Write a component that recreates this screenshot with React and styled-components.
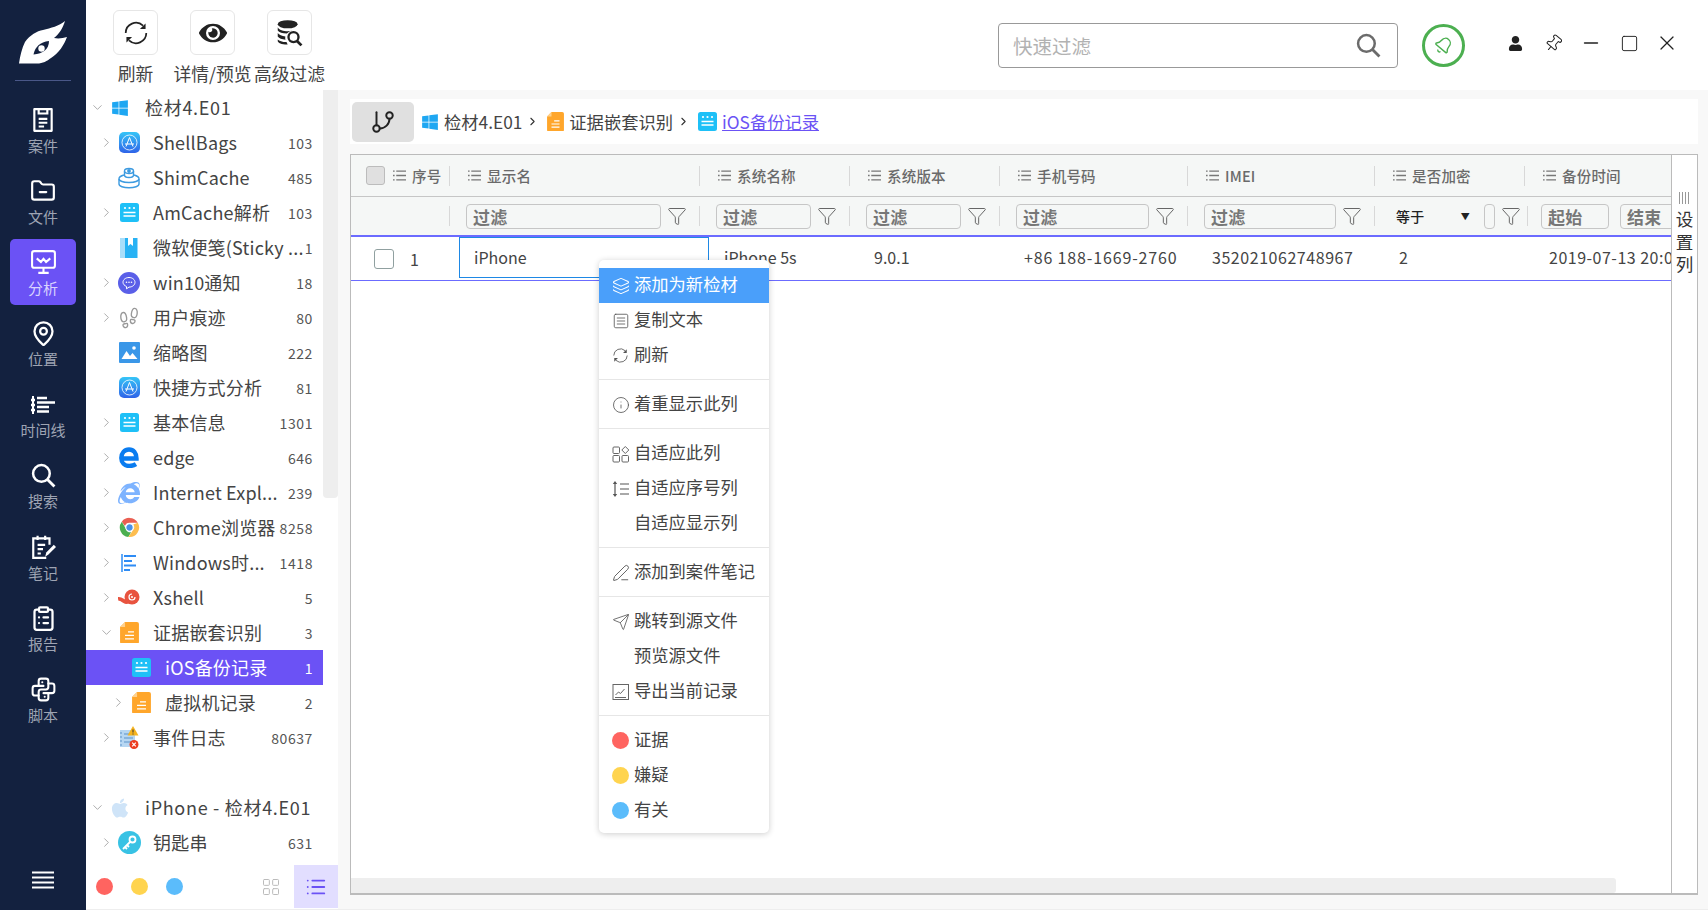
import React from 'react'
import styled, { createGlobalStyle } from 'styled-components'
import {
    ChevronDown,
    ChevronRight,
    Filter,
    FolderMinus,
    GitBranch,
    Info,
    Layers,
    MapPin,
    Minus,
    PenLine,
    Pin,
    Send,
    Square,
    SquareMenu,
    X,
    Bell,
    LayoutGrid,
    List,
    ClipboardList,
} from 'lucide-react'
import { TbBrandPython } from 'react-icons/tb'
import { IoFootstepsOutline } from 'react-icons/io5'
import { FaApple, FaEye, FaInternetExplorer, FaUser, FaWindows } from 'react-icons/fa'

const GlobalStyle = createGlobalStyle`
    html, body {
        margin: 0;
        padding: 0;
        background: #fff;
        font-family: "Noto Sans CJK SC", "Noto Sans", sans-serif;
        overflow: hidden;
    }
    * { box-sizing: border-box; }
`

const Page = styled.div`
    position: relative;
    display: flex;
    width: 1708px;
    height: 910px;
    overflow: hidden;
    color: #444;
`

/* ---------- left rail ---------- */
const Rail = styled.nav`
    width: 86px;
    flex: none;
    background: #13213f;
    display: flex;
    flex-direction: column;
    align-items: center;
`
const LogoBox = styled.div`
    width: 56px;
    height: 81px;
    margin-bottom: 16px;
    padding-top: 20px;
    border-bottom: 1px solid #4a5788;
    display: flex;
    justify-content: center;
`
const RailItem = styled.div`
    width: 66px;
    height: 66px;
    margin-bottom: 5.2px;
    padding-top: 10px;
    border-radius: 5px;
    display: flex;
    flex-direction: column;
    align-items: center;
    background: ${(p) => (p.$active ? '#6b52f5' : 'transparent')};
    color: #fff;
    span {
        margin-top: 2.5px;
        font-size: 15px;
        line-height: 20px;
        color: ${(p) => (p.$active ? '#d9d3ff' : '#9ea4b3')};
    }
`
const RailGlyph = styled.div`
    height: 26px;
    display: flex;
    align-items: center;
    justify-content: center;
`
const RailBurger = styled.div`
    margin-top: auto;
    margin-bottom: 21px;
    display: flex;
`

/* ---------- content ---------- */
const Content = styled.div`
    flex: 1;
    min-width: 0;
    display: flex;
    flex-direction: column;
`
const TopBar = styled.header`
    height: 90px;
    flex: none;
    display: flex;
    align-items: flex-start;
    padding-left: 11px;
`
const ToolItem = styled.div`
    width: 77px;
    padding-top: 10px;
    display: flex;
    flex-direction: column;
    align-items: center;
    font-size: 17.8px;
    line-height: 24px;
    color: #444;
    white-space: nowrap;
`
const ToolButton = styled.div`
    width: 45px;
    height: 45px;
    margin-bottom: 6px;
    border: 1px solid #e6e6e6;
    border-radius: 6px;
    display: flex;
    align-items: center;
    justify-content: center;
    color: #222;
`
const SearchBox = styled.div`
    width: 400px;
    height: 45px;
    margin: 23px 0 0 auto;
    padding: 0 16px 0 14px;
    border: 1px solid #999;
    border-radius: 4px;
    display: flex;
    align-items: center;
    justify-content: space-between;
    font-size: 19.5px;
    color: #b2b2b2;
`
const BellRing = styled.div`
    width: 43px;
    height: 43px;
    margin: 24px 31px 0 24px;
    border: 3px solid #4caf50;
    border-radius: 50%;
    display: flex;
    align-items: center;
    justify-content: center;
    color: #4caf50;
    svg { transform: rotate(40deg); }
`
const WindowControls = styled.div`
    display: flex;
    margin-top: 24px;
    padding-right: 22px;
`
const WindowButton = styled.div`
    width: 38px;
    height: 38px;
    display: flex;
    align-items: center;
    justify-content: center;
    color: #222;
`
const Body = styled.div`
    flex: 1;
    min-height: 0;
    display: flex;
    border-bottom: 1px solid #eee;
`

/* ---------- tree ---------- */
const TreePanel = styled.aside`
    position: relative;
    width: 252px;
    flex: none;
    display: flex;
    flex-direction: column;
    background: #fff;
`
const ScrollThumb = styled.div`
    position: absolute;
    top: 0;
    right: 0;
    width: 15px;
    height: 408px;
    background: #eee;
    border-radius: 0 0 4px 4px;
`
const TreeList = styled.div`
    flex: 1;
    min-height: 0;
    width: 237px;
`
const TreeRow = styled.div`
    height: 35px;
    display: flex;
    align-items: center;
    padding-left: ${(p) => p.$indent}px;
    padding-right: 10px;
    background: ${(p) => (p.$selected ? '#6b52f5' : 'transparent')};
    color: ${(p) => (p.$selected ? '#fff' : '#444')};
`
const Chevron = styled.div`
    width: 16px;
    flex: none;
    display: flex;
    justify-content: center;
    color: #888;
`
const TreeIcon = styled.div`
    width: 30px;
    height: 35px;
    flex: none;
    display: flex;
    align-items: center;
    justify-content: center;
`
const TreeLabel = styled.div`
    margin-left: ${(p) => (p.$root ? 10 : 9)}px;
    padding-bottom: 2px;
    flex: 1;
    min-width: 0;
    font-size: 18px;
    letter-spacing: ${(p) => (p.$root ? 0.7 : 0.2)}px;
    white-space: nowrap;
`
const TreeCount = styled.div`
    flex: none;
    font-size: 14px;
    letter-spacing: 0.6px;
    color: ${(p) => (p.$selected ? '#fff' : '#555')};
`
const TreeGap = styled.div`
    height: 35px;
`
const TreeFooter = styled.div`
    height: 43px;
    margin-bottom: 1px;
    flex: none;
    display: flex;
    align-items: center;
    padding-left: 10px;
`
const DotGroup = styled.div`
    display: flex;
    gap: 18px;
`
const Dot = styled.div`
    width: 17px;
    height: 17px;
    flex: none;
    border-radius: 50%;
    background: ${(p) => p.$color};
`
const FooterGrid = styled.div`
    margin-left: auto;
    margin-right: 13px;
    display: flex;
    color: #bbb;
`
const FooterList = styled.div`
    width: 44px;
    height: 43px;
    display: flex;
    align-items: center;
    justify-content: center;
    background: #e2deff;
    color: #6b52f5;
`

/* ---------- main panel ---------- */
const MainPanel = styled.main`
    flex: 1;
    min-width: 0;
    background: #f8f8f8;
    padding: 9px 10px 14px 12px;
    display: flex;
    flex-direction: column;
`
const CrumbBar = styled.div`
    height: 45px;
    flex: none;
    margin-bottom: 10px;
    padding: 3px 2px;
    background: #fff;
    display: flex;
    align-items: center;
    font-size: 17.3px;
    color: #444;
`
const BranchButton = styled.div`
    width: 62px;
    height: 40px;
    margin-right: 7px;
    border-radius: 5px;
    background: #e0e0e0;
    color: #222;
    display: flex;
    align-items: center;
    justify-content: center;
`
const CrumbText = styled.span`
    margin-left: 5px;
    white-space: nowrap;
`
const CrumbLink = styled(CrumbText)`
    color: #6b52f5;
    text-decoration: underline;
`
const CrumbArrow = styled.div`
    width: 25px;
    padding-right: 5px;
    flex: none;
    display: flex;
    justify-content: center;
    color: #333;
`
const Table = styled.section`
    flex: 1;
    min-height: 0;
    display: flex;
    background: #fff;
    border: 1px solid #bbb;
    border-bottom-width: 2px;
`
const TableMain = styled.div`
    flex: 1;
    min-width: 0;
    overflow: hidden;
    display: flex;
    flex-direction: column;
`
const HeadRow = styled.div`
    height: 42px;
    flex: none;
    display: flex;
    background: #f5f7f6;
    border-bottom: 1px solid #c6c6c6;
    width: max-content;
    min-width: 100%;
`
const FilterRow = styled.div`
    height: 38px;
    flex: none;
    display: flex;
    background: #f5f7f6;
    width: max-content;
    min-width: 100%;
`
const HeadCell = styled.div`
    width: ${(p) => p.$w}px;
    flex: none;
    display: flex;
    align-items: center;
    padding-left: ${(p) => p.$pad}px;
    font-size: 14.5px;
    font-weight: 500;
    letter-spacing: 0.2px;
    color: #6a6a6a;
    white-space: nowrap;
`
const HeadLines = styled.div`
    display: flex;
    flex: none;
    margin-right: 6px;
`
const ColumnSep = styled.div`
    width: 1px;
    height: 20px;
    margin-left: auto;
    flex: none;
    background: #d8d8d8;
`
const HeadCheck = styled.div`
    width: 19px;
    height: 19px;
    margin-right: 8px;
    flex: none;
    border: 1px solid #bcbcbc;
    border-radius: 3px;
    background: #e0e0e0;
`
const FilterInput = styled.div`
    width: ${(p) => p.$w}px;
    height: 25px;
    flex: none;
    padding-left: 6px;
    margin-right: ${(p) => p.$gap || 0}px;
    border: 1px solid #c6c6c6;
    border-radius: 4px;
    font-size: 17px;
    font-weight: 700;
    line-height: 23px;
    color: #777;
    overflow: hidden;
    white-space: nowrap;
`
const FilterIcon = styled.div`
    width: 32px;
    flex: none;
    display: flex;
    justify-content: center;
    color: #666;
`
const SelectText = styled.div`
    width: 93px;
    flex: none;
    padding: 0 14px 0 5px;
    display: flex;
    align-items: center;
    justify-content: space-between;
    font-size: 14px;
    font-weight: 500;
    color: #222;
    i {
        font-style: normal;
        font-size: 9px;
    }
`
const DataRow = styled.div`
    height: 46px;
    flex: none;
    display: flex;
    border-top: 2px solid #6b6bff;
    border-bottom: 1px solid #6b6bff;
    width: max-content;
    min-width: 100%;
`
const DataCell = styled.div`
    width: ${(p) => p.$w}px;
    height: 41px;
    flex: none;
    display: flex;
    align-items: center;
    padding: ${(p) => p.$top || 0}px 0 1px ${(p) => p.$pad}px;
    font-size: 16px;
    letter-spacing: ${(p) => p.$ls || 0}px;
    color: #444;
    white-space: nowrap;
    border: 1.5px solid ${(p) => (p.$focus ? '#1e88e5' : 'transparent')};
`
const RowCheck = styled.div`
    width: 20px;
    height: 20px;
    margin-right: 16px;
    flex: none;
    border: 1.5px solid #90a0a0;
    border-radius: 3px;
    background: #fff;
`
const TableFill = styled.div`
    flex: 1;
`
const HScrollBar = styled.div`
    width: 1265px;
    height: 15px;
    flex: none;
    background: #eee;
    border-radius: 0 3px 3px 0;
`
const SettingsColumn = styled.div`
    width: 26px;
    flex: none;
    padding-top: 37px;
    border-left: 1px solid #bbb;
    display: flex;
    flex-direction: column;
    align-items: center;
    font-size: 17.5px;
    line-height: 22.5px;
    color: #333;
`
const SettingsGrip = styled.div`
    display: flex;
    margin-bottom: 4px;
`

/* ---------- context menu ---------- */
const ContextMenu = styled.div`
    position: absolute;
    top: 260px;
    left: 599px;
    width: 170px;
    padding: 8px 0 5px;
    background: #fff;
    border-radius: 5px;
    box-shadow: 0 1px 6px rgba(0, 0, 0, 0.2);
    z-index: 5;
`
const MenuItem = styled.div`
    height: 35px;
    padding-bottom: 4px;
    display: flex;
    align-items: center;
    background: ${(p) => (p.$active ? '#4a9ffa' : 'transparent')};
    color: ${(p) => (p.$active ? '#fff' : '#444')};
    font-size: 17.3px;
    white-space: nowrap;
`
const MenuIcon = styled.div`
    width: 35px;
    padding: 4px 0 0 13px;
    flex: none;
    display: flex;
    align-items: center;
    color: ${(p) => (p.$active ? '#fff' : '#555')};
`
const MenuDivider = styled.div`
    height: 1px;
    margin: 6px 0 7px;
    background: #e6e6e6;
`

/* ---------- drawings ---------- */
const Logo = () => (
    <svg width="50" height="46" viewBox="19 22 50 46">
        <path
            fill="#fff"
            d="M20 65.500C21 58 23 50 26 44C31 37 38 33 44 32C52 30 60 28 66 23C64 30 60 36 55 40C60 41 64 40 68 39C65 47 60 55 52 60C48 63 44 65.500 38 65.500Z"
        />
        <path fill="#13213f" d="M34.500 56.500C36 49 41 44 50 43C50 51 44 56 34.500 56.500Z" />
        <circle cx="42.500" cy="50.500" r="3.200" fill="#fff" />
    </svg>
)

const Magnifier = ({ size = 24, color = 'currentColor', width = 2.4 }) => (
    <svg width={size} height={size} viewBox="0 0 24 24" fill="none" stroke={color} strokeWidth={width}>
        <circle cx="10" cy="10" r="8" />
        <path d="M15.800 15.800L22.500 22.500" strokeWidth={width * 1.15} />
    </svg>
)

const Sync = ({ size = 26, color = 'currentColor', width = 1.6 }) => (
    <svg width={size} height={size} viewBox="0 0 24 24" fill="none" stroke={color} strokeWidth={width}>
        <path d="M2.500 12a9.500 9.500 0 0 1 16-6.800" />
        <path d="M21.500 12a9.500 9.500 0 0 1-16 6.800" />
        <path d="M20.800 3.200v5.200h-5.200z" fill={color} stroke="none" />
        <path d="M3.200 20.800v-5.200h5.200z" fill={color} stroke="none" />
    </svg>
)

const DbSearch = () => (
    <svg width="28" height="28" viewBox="0 0 24 24" fill="#222">
        <ellipse cx="10" cy="4.500" rx="8.500" ry="3.500" />
        <path d="M1.500 7c1 2.400 5 3.400 8.500 3.400 1.500 0 3-.2 4.300-.6a7 7 0 0 0-5 2.600C5.500 12.300 2.500 11.300 1.500 9.800z" />
        <path d="M1.500 12c1 1.800 3.700 2.600 6.500 2.900-.2 1-.1 1.900.1 2.800-2.900-.3-5.500-1.200-6.600-2.800z" />
        <path d="M1.500 17.500c1.200 1.300 3.800 2.100 7.500 2.300l1 2c-5 .1-8.500-1.300-8.500-3z" />
        <circle cx="15" cy="15.500" r="4.300" fill="none" stroke="#222" strokeWidth="2" />
        <path d="M18 18.800l3.800 3.800" stroke="#222" strokeWidth="2.400" />
    </svg>
)

const RailCase = () => (
    <svg width="26" height="26" viewBox="0 0 24 24" fill="none" stroke="#fff" strokeWidth="2">
        <path d="M4 2h16v20H4z" strokeLinejoin="round" />
        <path d="M8 2v4h8V2M8 11h8M8 14.500h8M8 18h5" />
    </svg>
)

const RailScreen = () => (
    <svg width="27" height="26" viewBox="0 0 26 25" fill="none" stroke="#fff" strokeWidth="2">
        <rect x="2" y="2" width="22" height="16" rx="2" />
        <path d="M6.500 9l4 3.500 2.500-3 2.500 3 4-3.500" />
        <path d="M13 18v4M8 23h10" />
    </svg>
)

const RailTimeline = () => (
    <svg width="26" height="22" viewBox="0 0 26 22" fill="none" stroke="#fff" strokeWidth="2.400">
        <path d="M3 2v18" strokeWidth="2" />
        <path d="M1 6h4M1 11h4M1 16h4" />
        <path d="M7 4h10M7 8.500h18M7 13h12M7 17.500h12" />
    </svg>
)

const RailNote = () => (
    <svg width="26" height="26" viewBox="0 0 24 24" fill="none" stroke="#fff" strokeWidth="2">
        <path d="M15 22H3V4h15v6" />
        <path d="M7 1.500v4M14 1.500v4M7 10h7M7 14h5M7 18h3" />
        <path d="M14 21l1-4 7-7 2 2-7 7z" fill="#fff" stroke="none" />
    </svg>
)

const RailBurgerIcon = () => (
    <svg width="22" height="18" viewBox="0 0 22 18" stroke="#fff" strokeWidth="2.200">
        <path d="M0 1.500h22M0 6.500h22M0 11.500h22M0 16.500h22" />
    </svg>
)

const Lines = ({ color = '#777', size = 13 }) => (
    <svg width={size} height={size} viewBox="0 0 12 12" stroke={color} strokeWidth="1.200">
        <path d="M0 2h1.500M3 2h9M0 6h1.500M3 6h9M0 10h1.500M3 10h9" />
    </svg>
)

const AppStore = () => (
    <svg width="21" height="21" viewBox="0 0 21 21">
        <defs>
            <linearGradient id="appg" x1="0" y1="0" x2="0" y2="1">
                <stop offset="0" stopColor="#35c5f7" />
                <stop offset="1" stopColor="#2f63e8" />
            </linearGradient>
        </defs>
        <rect width="21" height="21" rx="5" fill="url(#appg)" />
        <circle cx="10.500" cy="10.500" r="7.500" fill="none" stroke="#fff" strokeWidth="0.800" />
        <path d="M10.500 5.500L7 14.500M10.500 5.500L14 14.500M6 12h9" stroke="#fff" strokeWidth="1" fill="none" />
    </svg>
)

const Stack = () => (
    <svg width="24" height="24" viewBox="0 0 24 24" fill="none" stroke="#3d9be0" strokeWidth="1.400">
        <ellipse cx="12" cy="5" rx="4.500" ry="2.500" />
        <path d="M7.500 5v4c0 1.400 2 2.500 4.500 2.500s4.500-1.100 4.500-2.500V5" />
        <path d="M7 9c-3 .8-5 2-5 3.800C2 15 6.500 16.500 12 16.500s10-1.500 10-3.700C22 11 20 9.800 17 9" />
        <path d="M2 13v5c0 2.200 4.500 3.800 10 3.800s10-1.600 10-3.800v-5" />
        <circle cx="12" cy="5" r="1.200" fill="#3d9be0" />
    </svg>
)

const NoteCard = () => (
    <svg width="19" height="19" viewBox="0 0 19 19">
        <rect width="19" height="19" rx="2.500" fill="#1ec0f7" />
        <circle cx="5" cy="5" r="1.100" fill="#fff" />
        <circle cx="9.500" cy="5" r="1.100" fill="#fff" />
        <circle cx="14" cy="5" r="1.100" fill="#fff" />
        <path d="M3.500 9.500h12M3.500 13h12" stroke="#fff" strokeWidth="1.300" />
    </svg>
)

const StickyBook = () => (
    <svg width="18" height="20" viewBox="0 0 18 20">
        <rect x="0" y="0" width="5" height="20" fill="#a8defa" />
        <path d="M5 0h3v8l2.500-2L13 8V0h4.500v20H5z" fill="#28b2f4" />
    </svg>
)

const ChatCircle = () => (
    <svg width="22" height="22" viewBox="0 0 22 22">
        <circle cx="11" cy="11" r="11" fill="#5a5fe8" />
        <path
            d="M11 5.500c3.300 0 6 2.100 6 4.800s-2.700 4.800-6 4.800l-2.500 1.700v-2.300c-2-.8-3.500-2.400-3.500-4.200 0-2.700 2.700-4.800 6-4.800z"
            fill="none"
            stroke="#fff"
            strokeWidth="1"
        />
        <circle cx="8.500" cy="10.300" r="0.800" fill="#fff" />
        <circle cx="11" cy="10.300" r="0.800" fill="#fff" />
        <circle cx="13.500" cy="10.300" r="0.800" fill="#fff" />
    </svg>
)

const Picture = () => (
    <svg width="21" height="21" viewBox="0 0 21 21">
        <rect width="21" height="21" fill="#3a97e8" rx="1" />
        <path d="M2.500 17l5-8 3.500 5 2.500-3 5 6z" fill="#fff" />
        <circle cx="15" cy="6" r="1.800" fill="#fff" />
    </svg>
)

const EdgeMark = () => (
    <svg width="20" height="21" viewBox="0 0 20 21" fill="none" stroke="#0a7cf0" strokeWidth="4.400">
        <path d="M4 11.500h13.500C17.500 6 14.500 2.500 10 2.500 5.500 2.500 2.300 6 2.300 11c0 4.800 3.300 8 8 8 2.700 0 4.800-.6 6.700-1.800" />
    </svg>
)

const Chrome = () => (
    <svg width="21" height="21" viewBox="0 0 24 24">
        <path d="M12 1a11 11 0 0 1 9.500 5.500H12A5.500 5.500 0 0 0 6.800 10.300L3.200 5.300A11 11 0 0 1 12 1z" fill="#ea5f52" />
        <path d="M3.200 5.300l4.800 8.400a5.500 5.500 0 0 0 5.800 3.800L10.700 22.900A11 11 0 0 1 3.200 5.300z" fill="#4caf50" />
        <path d="M21.500 6.500A11 11 0 0 1 10.700 22.900l4.800-7.300A5.500 5.500 0 0 0 16.300 8.500z" fill="#fdbd4f" />
        <circle cx="12" cy="12" r="4.200" fill="#4a90e8" stroke="#fff" strokeWidth="1.200" />
    </svg>
)

const TimelineBlue = () => (
    <svg width="20" height="20" viewBox="0 0 20 20" fill="none" stroke="#2e8cf5" strokeWidth="2">
        <path d="M3 1v18" strokeWidth="1.500" />
        <path d="M5 3h12M5 8h8M5 12.500h12M5 17h6" />
    </svg>
)

const XshellMark = () => (
    <svg width="22" height="20" viewBox="0 0 22 20">
        <circle cx="14" cy="9" r="7.500" fill="#e8533f" />
        <path d="M0 11c3-1 6 3 8 3 2 0 3-1 3-3" stroke="#e8533f" strokeWidth="4" fill="none" />
        <path d="M14 6a3 3 0 1 0 3 3" stroke="#fff" strokeWidth="1.200" fill="none" />
        <circle cx="14" cy="9" r="1" fill="#fff" />
    </svg>
)

const DocOrange = ({ size = 19 }) => (
    <svg width={size} height={size * 1.15} viewBox="0 0 19 22">
        <path d="M5 0h12a2 2 0 0 1 2 2v18a2 2 0 0 1-2 2H2a2 2 0 0 1-2-2V5z" fill="#ffa62b" />
        <path d="M5 0v5H0z" fill="#ffd18c" />
        <path d="M8 10h6M5 13.500h9M5 17h9" stroke="#fff" strokeWidth="1.200" />
    </svg>
)

const EventLog = () => (
    <svg width="20" height="24" viewBox="0 0 20 24">
        <rect x="1" y="4" width="15" height="17" fill="#b6d6f2" />
        <path d="M1 7h2M1 11h2M1 15h2M1 19h2M5 8h9M5 12h9M5 16h7" stroke="#5d93c9" strokeWidth="1" />
        <path d="M14 0l5.500 9.500h-11z" fill="#f5b31f" />
        <path d="M14 3.500v3M14 7.500v1" stroke="#333" strokeWidth="1" />
        <circle cx="15" cy="18.500" r="4.500" fill="#ec3d1f" />
        <path d="M13.200 16.700l3.600 3.600M16.800 16.700l-3.600 3.600" stroke="#fff" strokeWidth="1.200" />
    </svg>
)

const KeyCircle = () => (
    <svg width="23" height="23" viewBox="0 0 23 23">
        <circle cx="11.500" cy="11.500" r="11.500" fill="#38c2e4" />
        <circle cx="14.500" cy="8.500" r="3" fill="none" stroke="#fff" strokeWidth="1.800" />
        <path d="M12.500 10.500L5 18M7 16l2 2M9 14l2 2" stroke="#fff" strokeWidth="1.800" fill="none" />
    </svg>
)

const MenuBlocks = () => (
    <svg width="18" height="18" viewBox="0 0 18 18" fill="none" stroke="#666" strokeWidth="1">
        <rect x="1" y="2" width="6.500" height="6.500" rx="1" />
        <rect x="1" y="10.500" width="6.500" height="6.500" rx="1" />
        <rect x="10" y="10.500" width="6.500" height="6.500" rx="1" />
        <path d="M13.300 1.500l3.500 3.500-3.500 3.500L9.800 5z" />
    </svg>
)

const MenuSort = () => (
    <svg width="18" height="18" viewBox="0 0 18 18" fill="none" stroke="#555" strokeWidth="1.200">
        <path d="M3 3v12" />
        <path d="M3 1l2.200 3H.8zM3 17l2.200-3H.8z" fill="#555" stroke="none" />
        <path d="M8 4h9M8 9h9M8 14h9" />
    </svg>
)

const MenuChart = () => (
    <svg width="18" height="18" viewBox="0 0 18 18" fill="none" stroke="#666" strokeWidth="1">
        <rect x="1" y="1.500" width="15.500" height="15" />
        <path d="M3.500 12l3-3 2 1.500 4-4.500M3 14.500h11" />
    </svg>
)

/* ---------- data ---------- */
const railItems = [
    { label: '案件', icon: <RailCase /> },
    { label: '文件', icon: <FolderMinus size={26} strokeWidth={2} /> },
    { label: '分析', icon: <RailScreen />, active: true },
    { label: '位置', icon: <MapPin size={27} strokeWidth={2} /> },
    { label: '时间线', icon: <RailTimeline /> },
    { label: '搜索', icon: <Magnifier size={25} /> },
    { label: '笔记', icon: <RailNote /> },
    { label: '报告', icon: <ClipboardList size={27} strokeWidth={2} /> },
    { label: '脚本', icon: <TbBrandPython size={29} strokeWidth={1.7} /> },
]

const treeRows = [
    { label: '检材4.E01', root: true, open: true, icon: <FaWindows size={18} color="#1ea7f2" /> },
    { label: 'ShellBags', count: 103, arrow: true, icon: <AppStore /> },
    { label: 'ShimCache', count: 485, icon: <Stack /> },
    { label: 'AmCache解析', count: 103, arrow: true, icon: <NoteCard /> },
    { label: '微软便笺(Sticky ...', count: 1, icon: <StickyBook /> },
    { label: 'win10通知', count: 18, arrow: true, icon: <ChatCircle /> },
    { label: '用户痕迹', count: 80, arrow: true, icon: <IoFootstepsOutline size={22} color="#999" /> },
    { label: '缩略图', count: 222, icon: <Picture /> },
    { label: '快捷方式分析', count: 81, icon: <AppStore /> },
    { label: '基本信息', count: 1301, arrow: true, icon: <NoteCard /> },
    { label: 'edge', count: 646, arrow: true, icon: <EdgeMark /> },
    { label: 'Internet Expl...', count: 239, arrow: true, icon: <FaInternetExplorer size={22} color="#7db3ff" /> },
    { label: 'Chrome浏览器', count: 8258, arrow: true, icon: <Chrome /> },
    { label: 'Windows时...', count: 1418, arrow: true, icon: <TimelineBlue /> },
    { label: 'Xshell', count: 5, arrow: true, icon: <XshellMark /> },
    { label: '证据嵌套识别', count: 3, arrow: true, open: true, icon: <DocOrange /> },
    { label: 'iOS备份记录', count: 1, level: 2, selected: true, icon: <NoteCard /> },
    { label: '虚拟机记录', count: 2, level: 2, arrow: true, icon: <DocOrange /> },
    { label: '事件日志', count: 80637, arrow: true, icon: <EventLog /> },
    { gap: true },
    { label: 'iPhone - 检材4.E01', root: true, open: true, icon: <FaApple size={22} color="#cfe4f8" /> },
    { label: '钥匙串', count: 631, arrow: true, icon: <KeyCircle /> },
]

const columns = [
    { title: '显示名', w: 250, input: 195, value: 'iPhone', focus: true },
    { title: '系统名称', w: 150, input: 95, value: 'iPhone 5s' },
    { title: '系统版本', w: 150, input: 95, value: '9.0.1' },
    { title: '手机号码', w: 188, input: 133, value: '+86 188-1669-2760', ls: 0.85 },
    { title: 'IMEI', w: 187, input: 132, value: '352021062748967', ls: 0.55 },
    { title: '是否加密', w: 150, select: true, value: '2' },
    { title: '备份时间', w: 200, range: true, value: '2019-07-13 20:0', ls: 0.5 },
]

const menuGroups = [
    [
        { label: '添加为新检材', icon: <Layers size={18} strokeWidth={1.4} />, active: true },
        { label: '复制文本', icon: <SquareMenu size={18} strokeWidth={1.1} /> },
        { label: '刷新', icon: <Sync size={17} width={1.2} /> },
    ],
    [{ label: '着重显示此列', icon: <Info size={18} strokeWidth={1.1} /> }],
    [
        { label: '自适应此列', icon: <MenuBlocks /> },
        { label: '自适应序号列', icon: <MenuSort /> },
        { label: '自适应显示列' },
    ],
    [{ label: '添加到案件笔记', icon: <PenLine size={18} strokeWidth={1.2} /> }],
    [
        { label: '跳转到源文件', icon: <Send size={18} strokeWidth={1.1} /> },
        { label: '预览源文件' },
        { label: '导出当前记录', icon: <MenuChart /> },
    ],
    [
        { label: '证据', icon: <Dot $color="#ff6460" /> },
        { label: '嫌疑', icon: <Dot $color="#ffd44f" /> },
        { label: '有关', icon: <Dot $color="#5bbcfb" /> },
    ],
]

const Tree = () => (
    <TreeList>
        {treeRows.map((row, i) => {
            if (row.gap) return <TreeGap key={i} />
            const indent = row.root ? 3 : row.level === 2 ? 24 : 12
            return (
                <TreeRow key={i} $indent={indent} $selected={row.selected}>
                    <Chevron>
                        {row.open && <ChevronDown size={15} strokeWidth={1.1} />}
                        {row.arrow && !row.open && <ChevronRight size={15} strokeWidth={1.1} />}
                    </Chevron>
                    <TreeIcon>{row.icon}</TreeIcon>
                    <TreeLabel $root={row.root}>{row.label}</TreeLabel>
                    {row.count !== undefined && <TreeCount $selected={row.selected}>{row.count}</TreeCount>}
                </TreeRow>
            )
        })}
    </TreeList>
)

const GridTable = () => (
    <Table>
        <TableMain>
            <HeadRow>
                <HeadCell $w={99} $pad={15}>
                    <HeadCheck />
                    <HeadLines>
                        <Lines />
                    </HeadLines>
                    序号
                    <ColumnSep />
                </HeadCell>
                {columns.map((col) => (
                    <HeadCell key={col.title} $w={col.w} $pad={18}>
                        <HeadLines>
                            <Lines />
                        </HeadLines>
                        {col.title}
                        {!col.range && <ColumnSep />}
                    </HeadCell>
                ))}
            </HeadRow>
            <FilterRow>
                <HeadCell $w={99} $pad={0}>
                    <ColumnSep />
                </HeadCell>
                {columns.map((col) => (
                    <HeadCell key={col.title} $w={col.w} $pad={16}>
                        {col.select && (
                            <>
                                <SelectText>
                                    等于<i>▼</i>
                                </SelectText>
                                <FilterInput $w={11} />
                            </>
                        )}
                        {col.input && <FilterInput $w={col.input}>过滤</FilterInput>}
                        {col.range ? (
                            <>
                                <FilterInput $w={68} $gap={11}>
                                    起始
                                </FilterInput>
                                <FilterInput $w={68}>结束</FilterInput>
                            </>
                        ) : (
                            <>
                                <FilterIcon>
                                    <Filter size={20} strokeWidth={1.2} />
                                </FilterIcon>
                                <ColumnSep />
                            </>
                        )}
                    </HeadCell>
                ))}
            </FilterRow>
            <DataRow>
                <DataCell $w={108} $pad={22} $top={3}>
                    <RowCheck />1
                </DataCell>
                {columns.map((col) => (
                    <DataCell key={col.title} $w={col.w} $pad={14} $focus={col.focus} $ls={col.ls}>
                        {col.value}
                    </DataCell>
                ))}
            </DataRow>
            <TableFill />
            <HScrollBar />
        </TableMain>
        <SettingsColumn>
            <SettingsGrip>
                <svg width="13" height="12" viewBox="0 0 13 12" stroke="#999" strokeWidth="1">
                    <path d="M1.500 0v12M4.500 0v12M7.500 0v12M10.500 0v12" />
                </svg>
            </SettingsGrip>
            <span>设</span>
            <span>置</span>
            <span>列</span>
        </SettingsColumn>
    </Table>
)

const App = () => (
    <>
        <GlobalStyle />
        <Page>
            <Rail>
                <LogoBox>
                    <Logo />
                </LogoBox>
                {railItems.map((item) => (
                    <RailItem key={item.label} $active={item.active}>
                        <RailGlyph>{item.icon}</RailGlyph>
                        <span>{item.label}</span>
                    </RailItem>
                ))}
                <RailBurger>
                    <RailBurgerIcon />
                </RailBurger>
            </Rail>
            <Content>
                <TopBar>
                    <ToolItem>
                        <ToolButton>
                            <Sync />
                        </ToolButton>
                        刷新
                    </ToolItem>
                    <ToolItem>
                        <ToolButton>
                            <FaEye size={28} />
                        </ToolButton>
                        详情/预览
                    </ToolItem>
                    <ToolItem>
                        <ToolButton>
                            <DbSearch />
                        </ToolButton>
                        高级过滤
                    </ToolItem>
                    <SearchBox>
                        快速过滤
                        <Magnifier size={25} color="#6b6b6b" />
                    </SearchBox>
                    <BellRing>
                        <Bell size={19} strokeWidth={1.8} />
                    </BellRing>
                    <WindowControls>
                        <WindowButton>
                            <FaUser size={15} />
                        </WindowButton>
                        <WindowButton>
                            <Pin size={19} strokeWidth={1.3} style={{ transform: 'rotate(40deg)' }} />
                        </WindowButton>
                        <WindowButton>
                            <Minus size={22} strokeWidth={1.7} />
                        </WindowButton>
                        <WindowButton>
                            <Square size={19} strokeWidth={1.2} />
                        </WindowButton>
                        <WindowButton>
                            <X size={24} strokeWidth={1.2} />
                        </WindowButton>
                    </WindowControls>
                </TopBar>
                <Body>
                    <TreePanel>
                        <ScrollThumb />
                        <Tree />
                        <TreeFooter>
                            <DotGroup>
                                <Dot $color="#ff6460" />
                                <Dot $color="#ffd44f" />
                                <Dot $color="#5bbcfb" />
                            </DotGroup>
                            <FooterGrid>
                                <LayoutGrid size={20} strokeWidth={1.2} />
                            </FooterGrid>
                            <FooterList>
                                <List size={22} strokeWidth={2} />
                            </FooterList>
                        </TreeFooter>
                    </TreePanel>
                    <MainPanel>
                        <CrumbBar>
                            <BranchButton>
                                <GitBranch size={26} strokeWidth={1.8} />
                            </BranchButton>
                            <FaWindows size={18} color="#1ea7f2" />
                            <CrumbText>检材4.E01</CrumbText>
                            <CrumbArrow>
                                <ChevronRight size={13} strokeWidth={2} />
                            </CrumbArrow>
                            <DocOrange size={17} />
                            <CrumbText>证据嵌套识别</CrumbText>
                            <CrumbArrow>
                                <ChevronRight size={13} strokeWidth={2} />
                            </CrumbArrow>
                            <NoteCard />
                            <CrumbLink>iOS备份记录</CrumbLink>
                        </CrumbBar>
                        <GridTable />
                    </MainPanel>
                </Body>
            </Content>
            <ContextMenu>
                {menuGroups.map((group, g) => (
                    <React.Fragment key={g}>
                        {g > 0 && <MenuDivider />}
                        {group.map((item) => (
                            <MenuItem key={item.label} $active={item.active}>
                                <MenuIcon $active={item.active}>{item.icon}</MenuIcon>
                                {item.label}
                            </MenuItem>
                        ))}
                    </React.Fragment>
                ))}
            </ContextMenu>
        </Page>
    </>
)

export default App
